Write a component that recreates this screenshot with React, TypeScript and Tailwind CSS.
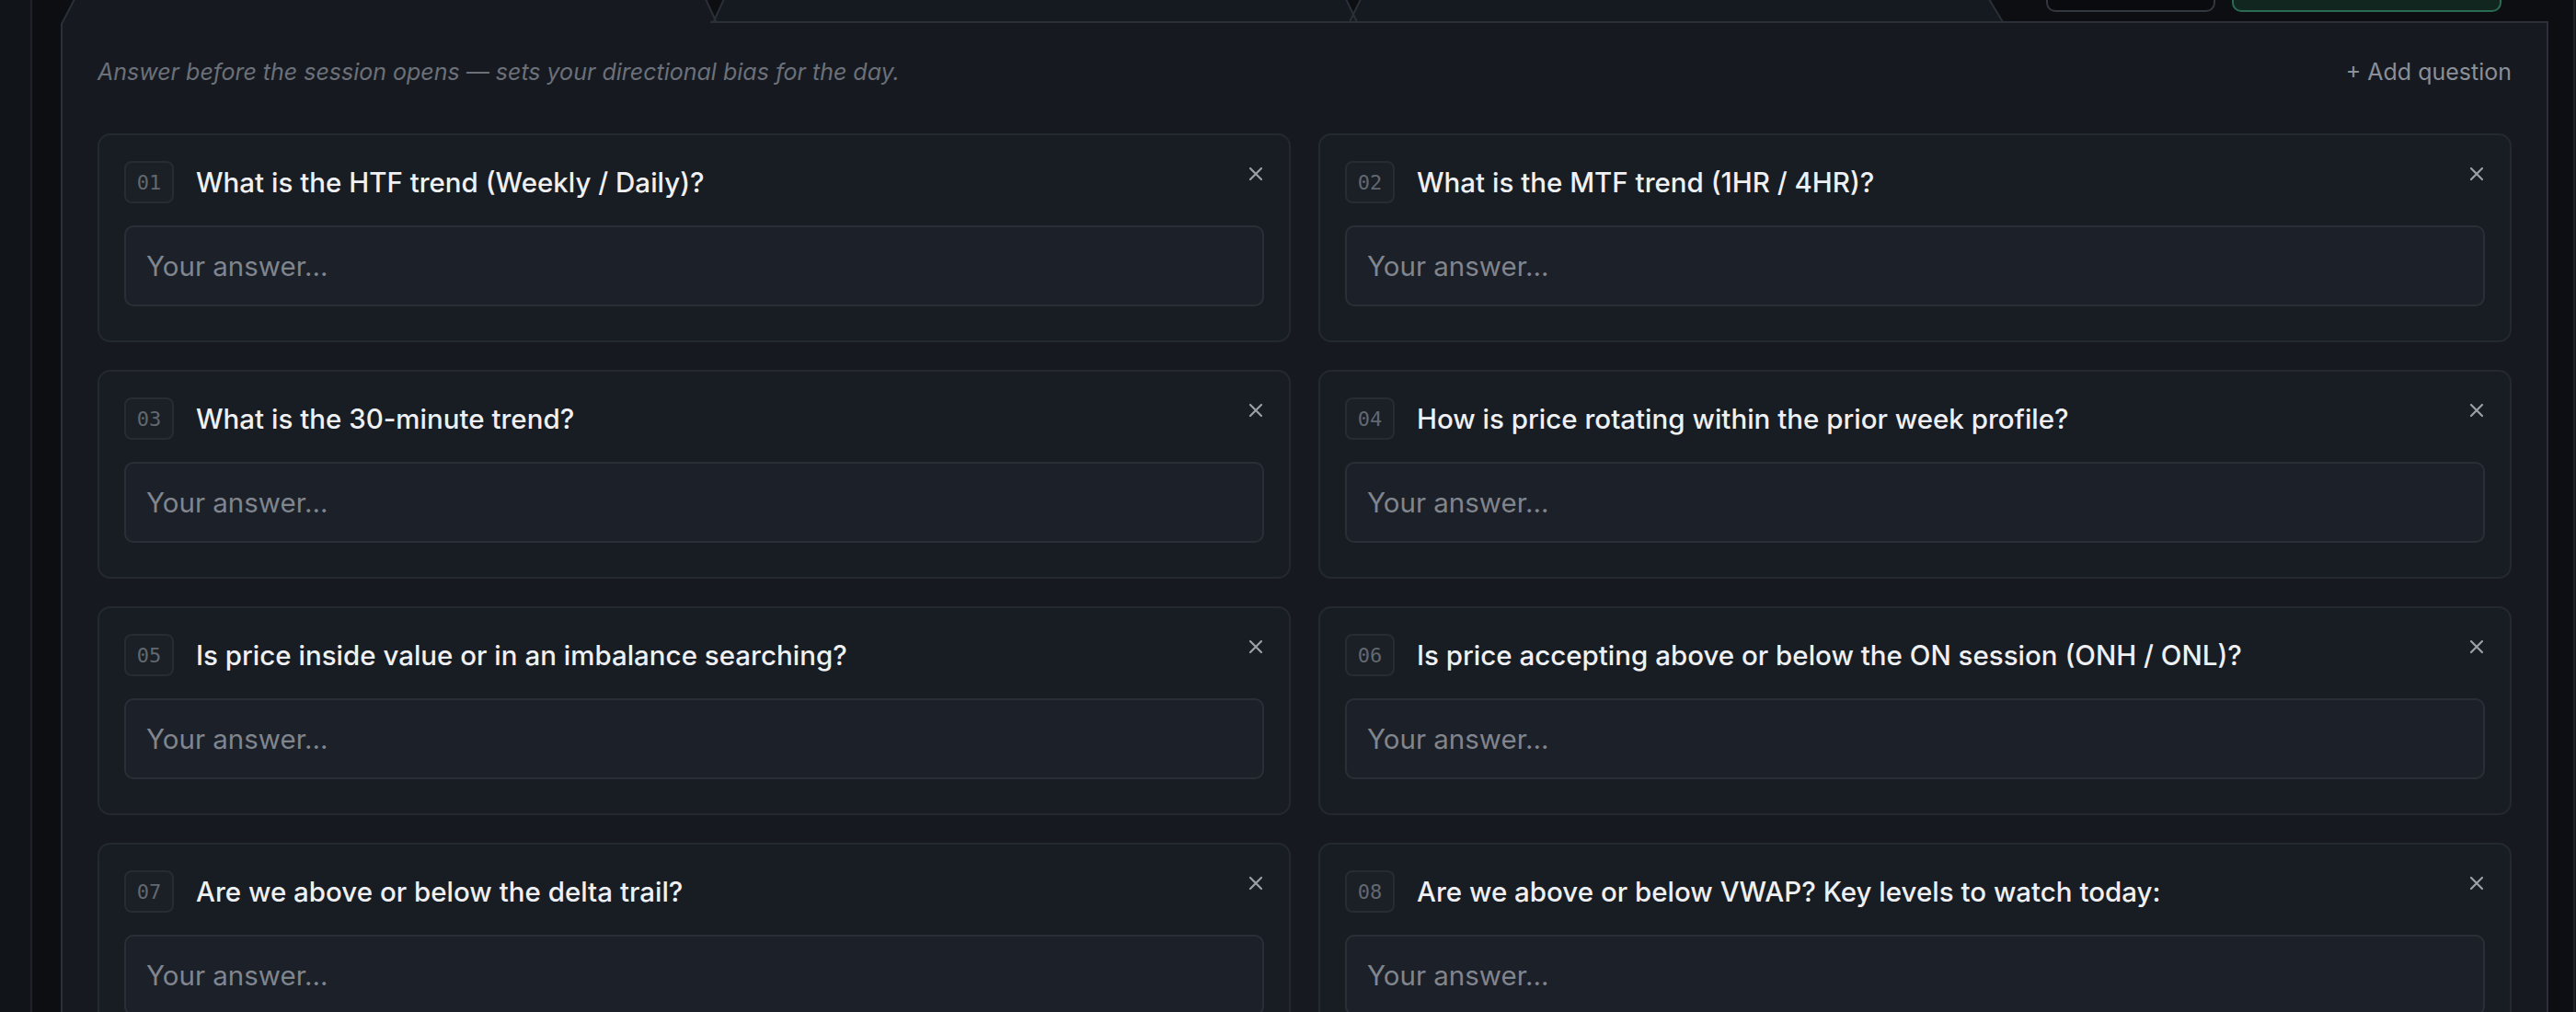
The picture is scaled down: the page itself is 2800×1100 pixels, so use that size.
import React from "react";

const questions = [
  "What is the HTF trend (Weekly / Daily)?",
  "What is the MTF trend (1HR / 4HR)?",
  "What is the 30-minute trend?",
  "How is price rotating within the prior week profile?",
  "Is price inside value or in an imbalance searching?",
  "Is price accepting above or below the ON session (ONH / ONL)?",
  "Are we above or below the delta trail?",
  "Are we above or below VWAP? Key levels to watch today:",
];

function CloseIcon() {
  return (
    <svg width="18" height="18" viewBox="0 0 18 18" fill="none">
      <path d="M3 3L15 15M15 3L3 15" stroke="#9aa0a8" strokeWidth="2.2" strokeLinecap="round" />
    </svg>
  );
}

function Card({ n, q }: { n: number; q: string }) {
  return (
    <div className="rounded-[14px] border-2 border-[#242930] bg-[#181c23] px-[27px] pt-[28px] pb-[37px]">
      <div className="flex items-center">
        <div className="flex h-[46px] w-[54px] shrink-0 items-center justify-center rounded-[8px] border-2 border-[#272c34] bg-[#1b1f26] font-['DejaVu_Sans_Mono',monospace] text-[22px] text-[#626870]">
          {String(n).padStart(2, "0")}
        </div>
        <div className="ml-[24px] font-['Inter',sans-serif] text-[29.5px] font-medium leading-[36px] text-[#eef0f3]">
          {q}
        </div>
        <div className="ml-auto self-start mt-[5px]">
          <CloseIcon />
        </div>
      </div>
      <input
        className="mt-[24px] block h-[88px] w-full rounded-[10px] border-2 border-[#2a2f37] bg-[#1c2028] px-[22px] font-['Inter',sans-serif] text-[29.5px] text-[#e5e7eb] outline-none placeholder:text-[#80858e]"
        placeholder="Your answer..."
      />
    </div>
  );
}

function Tabs() {
  return (
    <svg width="2112" height="25" viewBox="0 0 2112 25" className="block shrink-0">
      <polygon points="1,26 15,-1 701,-1 713,26" fill="#161a20" />
      <polygon points="709,26 721,-1 1397,-1 1409,26" fill="#151920" />
      <polygon points="1401,26 1413,-1 2096,-1 2111,26" fill="#151920" />
      <g stroke="#2b3038" strokeWidth="2" fill="none">
        <line x1="1" y1="26" x2="15" y2="-1" />
        <line x1="701" y1="-1" x2="713" y2="25" />
        <line x1="721" y1="-1" x2="709" y2="25" />
        <line x1="1397" y1="-1" x2="1409" y2="24" />
        <line x1="1413" y1="-1" x2="1401" y2="24" />
        <line x1="2096" y1="-1" x2="2111" y2="24" />
        <line x1="706" y1="24" x2="2112" y2="24" />
      </g>
    </svg>
  );
}

export default function App() {
  return (
    <div className="flex h-[1100px] w-[2800px] overflow-hidden bg-[#111418]">
      <div className="w-[33px] shrink-0" />
      <div className="flex w-[2766px] shrink-0 flex-col border-x-2 border-[#1f2329] bg-[#0c0e12] pl-[31px] pr-[27px]">
        <div className="flex h-[25px] shrink-0">
          <Tabs />
          <div className="flex flex-1 items-start gap-[18px] border-b-2 border-[#2b3038] pl-[46px]">
            <div className="h-[13px] w-[184px] rounded-b-[10px] border-2 border-t-0 border-[#33383f] bg-[#090b0e]" />
            <div className="h-[13px] w-[293px] rounded-b-[10px] border-2 border-t-0 border-[#2c6b53] bg-[#10261f]" />
          </div>
        </div>
        <div className="flex-1 border-x-2 border-b-2 border-[#2b3038] bg-[#161a20] px-[38px] pt-[38px]">
          <div className="flex h-[32px] items-center justify-between font-['Inter',sans-serif] text-[25px]">
            <span className="italic text-[#6b7079]">
              Answer before the session opens — sets your directional bias for the day.
            </span>
            <span className="text-[#8a8f98]">+ Add question</span>
          </div>
          <div className="mt-[50px] grid grid-cols-2 gap-[30px]">
            {questions.map((q, i) => (
              <Card key={i} n={i + 1} q={q} />
            ))}
          </div>
        </div>
      </div>
    </div>
  );
}
